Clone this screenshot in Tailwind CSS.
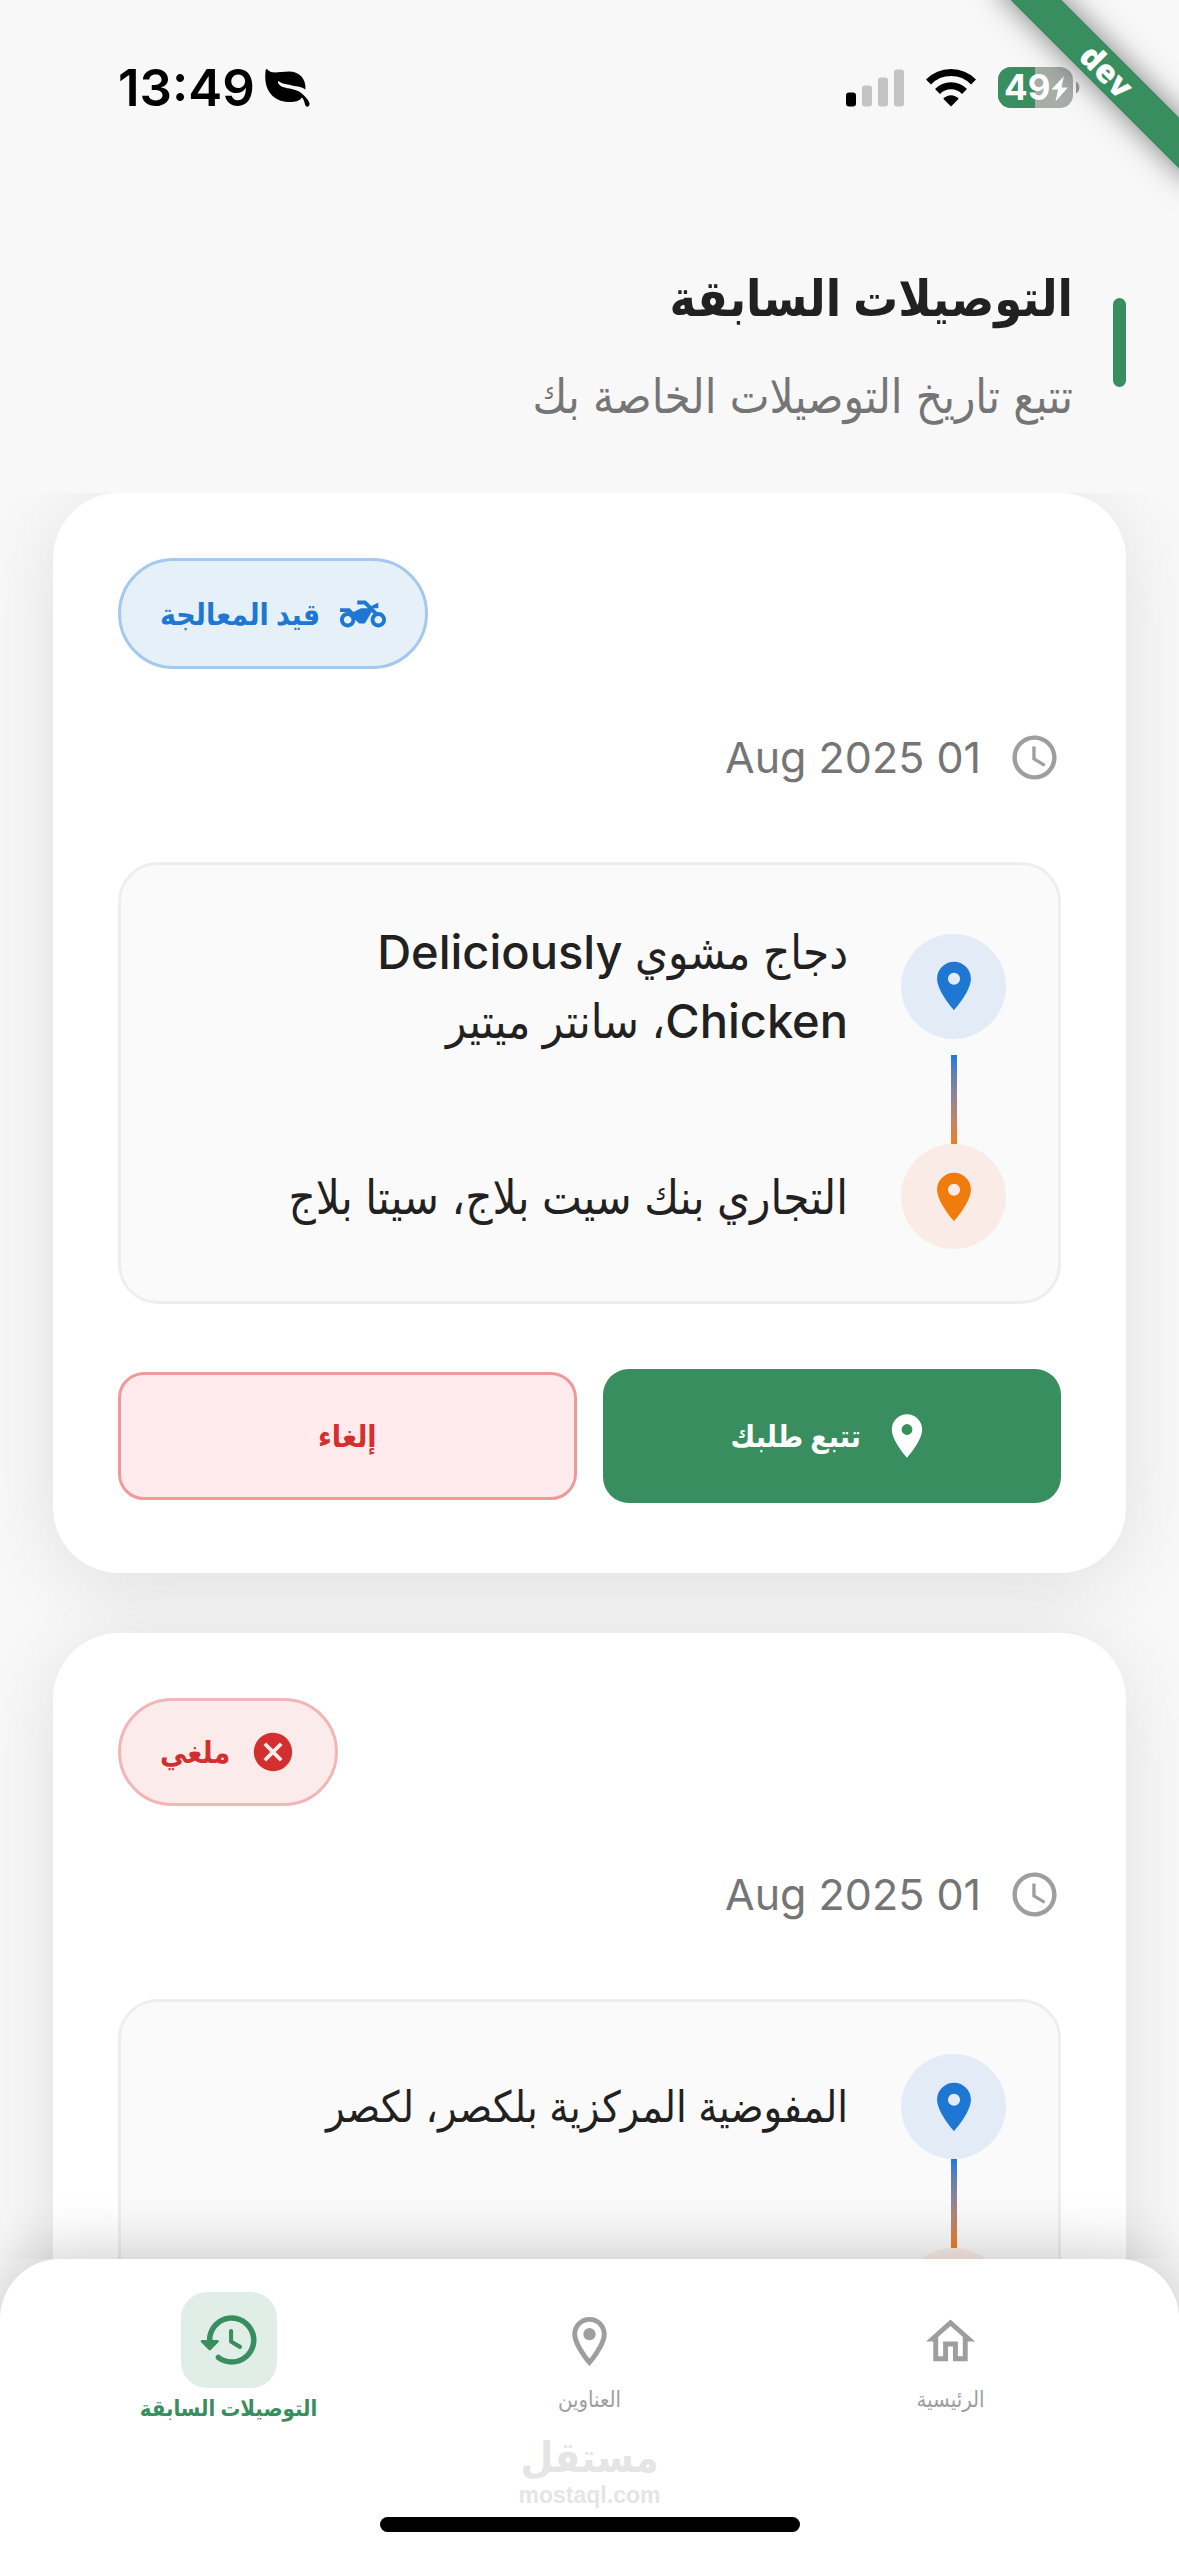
<!DOCTYPE html>
<html lang="ar" dir="rtl">
<head>
<meta charset="utf-8">
<meta name="viewport" content="width=device-width, initial-scale=1">
<title>التوصيلات السابقة</title>
<script src="https://cdn.jsdelivr.net/npm/@tailwindcss/browser@4"></script>
</head>
<body class="bg-[#f8f8f8] font-['Inter','DejaVu_Sans_Condensed','DejaVu_Sans',sans-serif] text-[#212121]">
<svg class="hidden" aria-hidden="true">
  <symbol id="pin" viewBox="0 0 24 24"><path d="M12 2C8.130 2 5 5.130 5 9c0 5.250 7 13 7 13s7-7.750 7-13c0-3.870-3.130-7-7-7zm0 9.500a2.500 2.500 0 1 1 0-5 2.500 2.500 0 0 1 0 5z"/></symbol>
  <symbol id="clock" viewBox="0 0 24 24"><path d="M11.990 2C6.470 2 2 6.480 2 12s4.470 10 9.990 10C17.520 22 22 17.520 22 12S17.520 2 11.990 2zM12 20c-4.420 0-8-3.580-8-8s3.580-8 8-8 8 3.580 8 8-3.580 8-8 8zm.5-13H11v6l5.250 3.150.75-1.230-4.500-2.670z"/></symbol>
</svg>
<div class="relative flex h-screen flex-col overflow-hidden">

  <!-- Status bar -->
  <div dir="ltr" class="flex h-[176px] shrink-0 items-center justify-between pr-[98px] pl-[118px]">
    <div class="flex items-center gap-2.5">
      <span class="text-[51px] leading-[60px] font-semibold text-black">13:49</span>
      <svg class="h-[38px] w-[45px]" viewBox="0 0 45 38" aria-hidden="true"><path fill="#000" d="M1.500 0C2.500 0 3 1.500 5 2.600C9 4.500 16 2.600 24 2.600C34 2.600 41 9 40.500 20.500C36 17 33 17.800 27 16.400C20 14.800 17 15 13.500 12C12.400 12.200 12.800 14 14 15.500C18 20 26 18.500 33 22C38 24.500 44 31 44.500 34.500C44.700 37 43 38 41.200 37.500C39.500 36 40 32 37 28.500C34 32.500 29 33.500 23 33C9 32.500 .5 22 .3 9C.3 5 .4 0 1.500 0Z"/></svg>
    </div>
    <div class="flex items-center gap-[22px]">
      <svg class="h-[38px] w-[58px]" viewBox="0 0 58 38" aria-hidden="true"><rect y="23.500" width="10" height="14" rx="3"/><g fill="#c4c4c4"><rect x="16" y="16.500" width="10" height="21" rx="3"/><rect x="32" y="8.500" width="10" height="29" rx="3"/><rect x="48" y=".5" width="10" height="37" rx="3"/></g></svg>
      <svg class="h-[38px] w-[50px]" viewBox="0 0 50 38" aria-hidden="true"><g fill="none" stroke="#000" stroke-width="7"><path d="M2.500 13A31.500 31.500 0 0 1 47.500 13"/><path d="M11.500 22.500A19 19 0 0 1 38.500 22.500"/></g><path d="M25 37.500L17.300 29.800C21.500 25 28.500 25 32.700 29.800Z"/></svg>
      <svg class="h-[42px] w-[83px]" viewBox="0 0 83 42" role="img" aria-label="49%"><defs><clipPath id="cell"><rect width="75" height="41" rx="13"/></clipPath></defs><g clip-path="url(#cell)"><rect width="75" height="41" fill="#a7ada9"/><rect width="37" height="41" fill="#388e5e"/></g><path fill="#9c9c9c" d="M78 14.500a7 7 0 0 1 0 12z"/><text x="6" y="33" fill="#fff" font-family="Inter" font-weight="700" font-size="35">49</text><path fill="#fff" d="M66 9L53.500 22.500H60L57.500 34.500L70 20.500H63.500Z"/></svg>
    </div>
  </div>

  <!-- Environment ribbon -->
  <div class="absolute top-[53px] right-[-68px] flex h-9 w-[280px] rotate-45 items-center justify-center bg-[#388e5e] font-['Open_Sans',sans-serif] text-[32px] leading-9 font-extrabold text-white shadow-[0_0_30px_rgba(0,0,0,0.5)]">dev</div>

  <header class="flex h-[317px] shrink-0 items-start gap-10 px-[53px] pt-[78px]">
    <div class="mt-11 h-[89px] w-[13px] rounded-full bg-[#388e5e]"></div>
    <div>
      <h1 class="text-[50px] leading-[88px] font-bold">التوصيلات السابقة</h1>
      <p class="text-[47px] leading-[108px] text-[#757575]">تتبع تاريخ التوصيلات الخاصة بك</p>
    </div>
  </header>

  <main class="flex min-h-0 flex-1 flex-col gap-[60px] overflow-hidden px-[53px]">
    <article class="shrink-0 rounded-[66px] bg-white px-[65px] pt-[65px] pb-[70px] shadow-[0_12px_80px_rgba(0,0,0,0.1)]">
      <div class="flex justify-end">
        <div class="flex h-[111px] items-center gap-5 rounded-full border-3 border-[#a5c8ee] bg-[#e6f0f9] px-[39px] text-[#1e77d3]">
          <svg class="size-[46px]" viewBox="0 0 24 24" fill="currentColor" aria-hidden="true"><path d="M20 11c-.18 0-.36.03-.53.05L17.410 9H20V6l-3.720 1.860L13.410 5H9v2h3.590l2 2H11l-4 2-2-2H0v2h4c-2.210 0-4 1.790-4 4s1.790 4 4 4 4-1.790 4-4l2 2h3l3.490-6.100 1.010 1.010c-.91.73-1.500 1.840-1.500 3.090 0 2.210 1.790 4 4 4s4-1.790 4-4-1.790-4-4-4zM4 17c-1.100 0-2-.9-2-2s.9-2 2-2 2 .9 2 2-.9 2-2 2zm16 0c-1.100 0-2-.9-2-2s.9-2 2-2 2 .9 2 2-.9 2-2 2z"/></svg>
          <span class="text-[30px] leading-[60px] font-bold">قيد المعالجة</span>
        </div>
      </div>
      <div class="mt-[62px] flex h-[53px] items-center gap-[27px]">
        <svg class="size-[53px] text-[#9e9e9e]" fill="currentColor" aria-hidden="true"><use href="#clock"/></svg>
        <time datetime="2025-08-01" class="text-[43px] leading-[53px] text-[#757575]">01 Aug 2025</time>
      </div>
      <div class="mt-[78px] rounded-[40px] border-3 border-[#eeeeee] bg-[#fafafa] p-[52px]">
        <div class="flex items-center gap-[53px]">
          <span class="flex size-[105px] shrink-0 items-center justify-center rounded-full bg-[#e3ebf7] text-[#1e77d3]"><svg class="size-[58px]" fill="currentColor" aria-hidden="true"><use href="#pin"/></svg></span>
          <p class="text-[47px] leading-[69px] font-medium">دجاج مشوي Deliciously<br>Chicken، سانتر ميتير</p>
        </div>
        <div class="flex w-[105px] justify-center"><div class="h-[89px] w-1.5 bg-linear-to-b from-[#1e77d3] to-[#ef7c0c]"></div></div>
        <div class="flex items-center gap-[53px]">
          <span class="flex size-[105px] shrink-0 items-center justify-center rounded-full bg-[#faebe7] text-[#ef7c0c]"><svg class="size-[58px]" fill="currentColor" aria-hidden="true"><use href="#pin"/></svg></span>
          <p class="text-[47px] leading-[69px] font-medium">التجاري بنك سيت بلاج، سيتا بلاج</p>
        </div>
      </div>
      <div class="mt-[65px] grid grid-cols-2 items-center gap-[26px]">
        <button type="button" class="flex h-[134px] items-center justify-center gap-5 rounded-[26px] bg-[#388e5e] text-white">
          <svg class="size-[52px]" fill="currentColor" aria-hidden="true"><use href="#pin"/></svg>
          <span class="text-[30px] leading-[60px] font-bold">تتبع طلبك</span>
        </button>
        <button type="button" class="h-[128px] rounded-[26px] border-3 border-[#ef9a9a] bg-[#ffebee] text-[30px] leading-[60px] font-bold text-[#d32f2f]">إلغاء</button>
      </div>
    </article>

    <article class="shrink-0 rounded-[66px] bg-white px-[65px] pt-[65px] pb-[70px] shadow-[0_12px_80px_rgba(0,0,0,0.1)]">
      <div class="flex justify-end">
        <div class="flex h-[108px] items-center gap-5 rounded-full border-3 border-[#f2b6b6] bg-[#fbebea] px-[39px] text-[#d32f2f]">
          <svg class="size-[46px]" viewBox="0 0 24 24" fill="currentColor" aria-hidden="true"><path d="M12 2C6.470 2 2 6.470 2 12s4.470 10 10 10 10-4.470 10-10S17.530 2 12 2zm5 13.590L15.590 17 12 13.410 8.410 17 7 15.590 10.590 12 7 8.410 8.410 7 12 10.590 15.590 7 17 8.410 13.410 12 17 15.590z"/></svg>
          <span class="text-[30px] leading-[60px] font-bold">ملغي</span>
        </div>
      </div>
      <div class="mt-[62px] flex h-[53px] items-center gap-[27px]">
        <svg class="size-[53px] text-[#9e9e9e]" fill="currentColor" aria-hidden="true"><use href="#clock"/></svg>
        <time datetime="2025-08-01" class="text-[43px] leading-[53px] text-[#757575]">01 Aug 2025</time>
      </div>
      <div class="mt-[78px] rounded-[40px] border-3 border-[#eeeeee] bg-[#fafafa] p-[52px]">
        <div class="flex items-center gap-[53px]">
          <span class="flex size-[105px] shrink-0 items-center justify-center rounded-full bg-[#e3ebf7] text-[#1e77d3]"><svg class="size-[58px]" fill="currentColor" aria-hidden="true"><use href="#pin"/></svg></span>
          <p class="text-[43px] leading-[69px] font-medium">المفوضية المركزية بلكصر، لكصر</p>
        </div>
        <div class="flex w-[105px] justify-center"><div class="h-[89px] w-1.5 bg-linear-to-b from-[#1e77d3] to-[#ef7c0c]"></div></div>
        <span class="flex size-[105px] items-center justify-center rounded-full bg-[#faebe7] text-[#ef7c0c]"><svg class="size-[58px]" fill="currentColor" aria-hidden="true"><use href="#pin"/></svg></span>
      </div>
    </article>
  </main>

  <nav class="relative h-[297px] shrink-0 rounded-t-[60px] bg-white shadow-[0_-6px_60px_rgba(0,0,0,0.2)]">
    <div class="grid h-[174px] grid-cols-3 px-12 text-[22px] leading-7 text-[#9e9e9e]">
      <a href="#" class="flex flex-col items-center gap-3.5 pt-[53px]">
        <svg class="size-[59px]" viewBox="0 0 24 24" fill="currentColor" aria-hidden="true"><path d="M12 5.690l5 4.500V18h-2v-6H9v6H7v-7.810l5-4.500M12 3L2 12h3v8h6v-6h2v6h6v-8h3L12 3z"/></svg>
        الرئيسية
      </a>
      <a href="#" class="flex flex-col items-center gap-3.5 pt-[53px]">
        <svg class="size-[59px]" viewBox="0 0 24 24" fill="currentColor" aria-hidden="true"><path d="M12 2C8.130 2 5 5.130 5 9c0 5.250 7 13 7 13s7-7.750 7-13c0-3.870-3.130-7-7-7zM7 9c0-2.760 2.240-5 5-5s5 2.240 5 5c0 2.880-2.880 7.190-5 9.880C9.920 16.210 7 11.850 7 9z"/><circle cx="12" cy="9" r="2.500"/></svg>
        العناوين
      </a>
      <a href="#" aria-current="page" class="flex flex-col items-center gap-1.5 pt-[33px] font-bold text-[#388e5e]">
        <span class="flex size-24 items-center justify-center rounded-[26px] bg-[#e1eee7]"><svg class="size-[66px]" viewBox="0 0 24 24" fill="currentColor" aria-hidden="true"><path d="M13.260 3C8.170 2.860 4 6.950 4 12H2.210c-.45 0-.67.54-.35.85l2.790 2.800c.2.2.51.2.71 0l2.790-2.800c.31-.31.09-.85-.36-.85H6c0-3.900 3.180-7.050 7.100-7 3.720.05 6.850 3.180 6.900 6.900.05 3.910-3.100 7.100-7 7.100-1.610 0-3.100-.55-4.280-1.480-.4-.31-.96-.28-1.320.08-.42.43-.39 1.130.08 1.500 1.520 1.200 3.440 1.900 5.520 1.900 5.050 0 9.140-4.170 9-9.260-.13-4.690-4.050-8.610-8.740-8.740zm-.51 5c-.41 0-.75.34-.75.75v3.680c0 .35.19.68.49.86l3.120 1.850c.36.21.82.09 1.030-.26.21-.36.09-.82-.26-1.030l-2.880-1.710v-3.400c0-.4-.34-.74-.75-.74z"/></svg></span>
        التوصيلات السابقة
      </a>
    </div>
    <div class="flex flex-col items-center font-bold text-[#e5e5e5]">
      <span class="text-[42px] leading-[48px]">مستقل</span>
      <span dir="ltr" class="font-['Liberation_Sans',sans-serif] text-[23px] leading-7">mostaql.com</span>
    </div>
    <div class="mx-auto mt-2 h-[15px] w-[420px] rounded-full bg-black"></div>
  </nav>
</div>
</body>
</html>
